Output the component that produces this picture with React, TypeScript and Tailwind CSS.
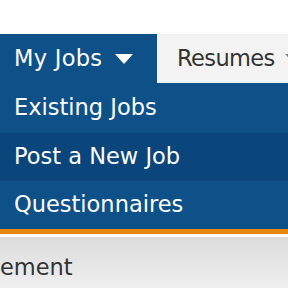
export default function App() {
  const font = { fontFamily: '"DejaVu Sans", Tahoma, sans-serif' };
  return (
    <div className="w-[288px] h-[288px] overflow-hidden bg-white" style={font}>
      <div className="h-[34px] bg-white" />
      <div className="flex h-[49px] bg-[#0e5189]">
        <div className="w-[157px] shrink-0 flex items-center pl-[14px] text-white text-[22.5px]">
          <span className="tracking-[0.3px]">My Jobs</span>
          <svg className="ml-[13px]" width="18" height="10" viewBox="0 0 18 10">
            <polygon points="0,0 18,0 9,10" fill="#ffffff" />
          </svg>
        </div>
        <div className="flex-1 flex items-center pl-[20px] bg-[#f3f3f3] text-[#333333] text-[22.5px] whitespace-nowrap overflow-hidden">
          <span className="tracking-[-0.6px]">Resumes</span>
          <svg className="ml-[10px] shrink-0" width="18" height="10" viewBox="0 0 18 10">
            <polygon points="0,0 18,0 9,10" fill="#888888" />
          </svg>
        </div>
      </div>
      <div className="flex flex-col text-white text-[22.5px]">
        <div className="h-[50px] flex items-center pl-[14px] bg-[#0e5189]">Existing Jobs</div>
        <div className="h-[48px] flex items-center pl-[14px] bg-[#0a467c]">Post a New Job</div>
        <div className="h-[48px] flex items-center pl-[14px] bg-[#0e5189]">Questionnaires</div>
      </div>
      <div className="h-[5px] bg-[#e8870f]" />
      <div className="h-[3px] bg-white" />
      <div className="h-[51px] bg-gradient-to-b from-[#dcdcdc] to-[#efefef] flex items-center pt-[10px] text-[#333333] text-[22.5px]">
        <span>ement</span>
      </div>
    </div>
  );
}
